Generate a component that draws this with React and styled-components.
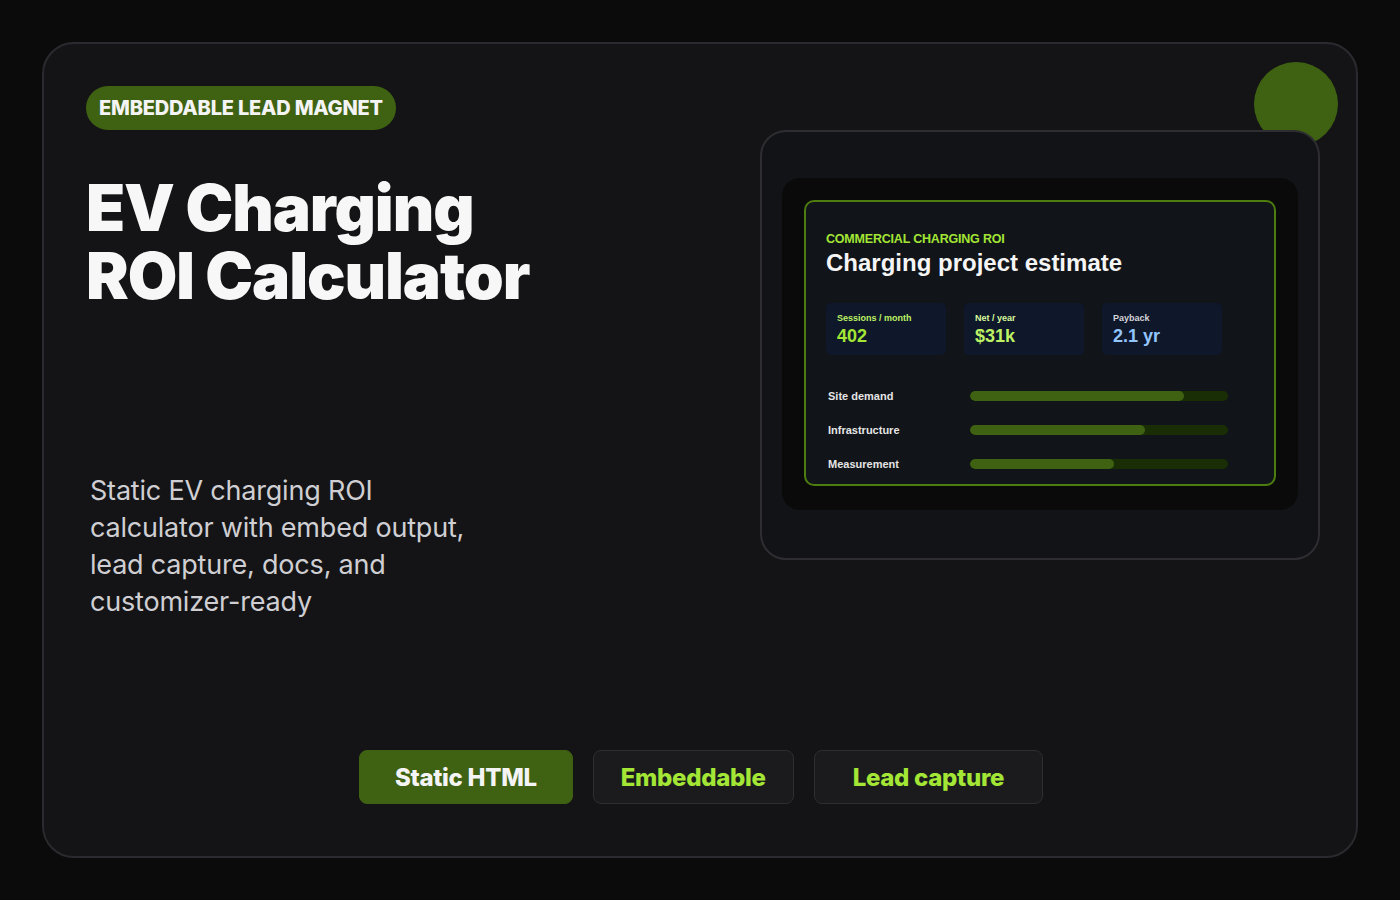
import React from "react";
import styled, { createGlobalStyle } from "styled-components";

const Global = createGlobalStyle`
  html, body { margin: 0; padding: 0; background: #0b0b0c; }
  body { font-family: Inter, "Noto Sans", sans-serif; }
  * { box-sizing: border-box; }
`;

const Page = styled.div`
  width: 1400px; height: 900px; padding: 42px;
`;
const Card = styled.div`
  position: relative; height: 816px; border: 2px solid #2a2a2f; border-radius: 32px;
  background: #141416; padding: 42px 36px 52px 42px; display: flex; flex-direction: column;
`;
const Top = styled.div` display: flex; justify-content: space-between; `;
const Left = styled.div` display: flex; flex-direction: column; align-items: flex-start; `;
const Badge = styled.div`
  background: #3f6212; color: #f4f4f5; border-radius: 22px; height: 44px; padding: 0 13px;
  display: flex; align-items: center; font-size: 20px; font-weight: 800; letter-spacing: -0.2px;
`;
const Title = styled.h1`
  margin: 44px 0 0; color: #f7f7f7; font-size: 64px; font-weight: 900; line-height: 68px; letter-spacing: -1.1px;
`;
const Desc = styled.p`
  margin: 162px 0 0 4px; width: 400px; color: #cfcfd3; font-size: 27px; line-height: 37px; font-weight: 400; letter-spacing: -0.2px;
`;
const Right = styled.div` position: relative; margin-top: 44px; `;
const Dot = styled.div`
  position: absolute; right: -18px; top: -68px; width: 84px; height: 84px; border-radius: 50%; background: #3f6212;
`;
const Frame = styled.div`
  position: relative; width: 560px; height: 430px; border: 2px solid #2d2d32; border-radius: 26px;
  background: #121316; padding: 46px 20px;
`;
const Screen = styled.div`
  background: #0a0a0a; border-radius: 18px; padding: 22px 22px; height: 332px;
`;
const Panel = styled.div`
  border: 2px solid #4d7c0f; border-radius: 10px; background: #111418; height: 286px;
  padding: 30px 20px 0 20px; font-family: "Liberation Sans", Arial, sans-serif;
`;
const Eyebrow = styled.div` color: #a3e635; font-size: 12.5px; font-weight: 700; letter-spacing: -0.2px; `;
const PanelTitle = styled.div` color: #f5f5f5; font-size: 24px; font-weight: 700; margin-top: 3px; `;
const Stats = styled.div` display: flex; gap: 18px; margin-top: 26px; `;
const Stat = styled.div`
  width: 120px; height: 52px; background: #0f172a; border-radius: 5px; padding: 10px 11px;
`;
const StatLabel = styled.div` font-size: 9px; color: ${p => p.$c}; font-weight: 700; `;
const StatValue = styled.div` font-size: 18px; font-weight: 700; color: ${p => p.$c}; margin-top: 3px; `;
const Bars = styled.div` display: flex; flex-direction: column; gap: 22px; margin-top: 35px; padding-left: 2px; `;
const BarRow = styled.div` display: flex; align-items: center; `;
const BarLabel = styled.div` width: 142px; color: #e5e5e5; font-size: 11px; font-weight: 700; `;
const Track = styled.div` width: 258px; height: 10px; border-radius: 5px; background: #1a2e05; overflow: hidden; `;
const Fill = styled.div` height: 100%; background: #3f6212; border-radius: 5px; `;
const Buttons = styled.div` margin-top: auto; display: flex; justify-content: center; gap: 20px; margin-left: -4px; `;
const Btn = styled.div`
  height: 54px; padding: 0 ${p => p.$px}px; display: flex; align-items: center; border-radius: 8px;
  font-size: 24px; font-weight: 800; letter-spacing: -0.3px;
  background: ${p => (p.$primary ? "#3f6212" : "#1b1b1e")};
  border: 1px solid ${p => (p.$primary ? "#3f6212" : "#2d2d32")};
  color: ${p => (p.$primary ? "#f4f4f5" : "#a3e635")};
`;

const bars = [["Site demand", 83], ["Infrastructure", 68], ["Measurement", 56]];

export default function App() {
  return (
    <Page>
      <Global />
      <Card>
        <Top>
          <Left>
            <Badge>EMBEDDABLE LEAD MAGNET</Badge>
            <Title>EV Charging<br />ROI Calculator</Title>
            <Desc>Static EV charging ROI calculator with embed output, lead capture, docs, and customizer-ready</Desc>
          </Left>
          <Right>
            <Dot />
            <Frame>
              <Screen>
                <Panel>
                  <Eyebrow>COMMERCIAL CHARGING ROI</Eyebrow>
                  <PanelTitle>Charging project estimate</PanelTitle>
                  <Stats>
                    <Stat><StatLabel $c="#bef264">Sessions / month</StatLabel><StatValue $c="#a3e635">402</StatValue></Stat>
                    <Stat><StatLabel $c="#d9f99d">Net / year</StatLabel><StatValue $c="#bef264">$31k</StatValue></Stat>
                    <Stat><StatLabel $c="#d4d4d8">Payback</StatLabel><StatValue $c="#93c5fd">2.1 yr</StatValue></Stat>
                  </Stats>
                  <Bars>
                    {bars.map(([l, v]) => (
                      <BarRow key={l}>
                        <BarLabel>{l}</BarLabel>
                        <Track><Fill style={{ width: `${v}%` }} /></Track>
                      </BarRow>
                    ))}
                  </Bars>
                </Panel>
              </Screen>
            </Frame>
          </Right>
        </Top>
        <Buttons>
          <Btn $primary $px={35}>Static HTML</Btn>
          <Btn $px={27}>Embeddable</Btn>
          <Btn $px={38}>Lead capture</Btn>
        </Buttons>
      </Card>
    </Page>
  );
}
